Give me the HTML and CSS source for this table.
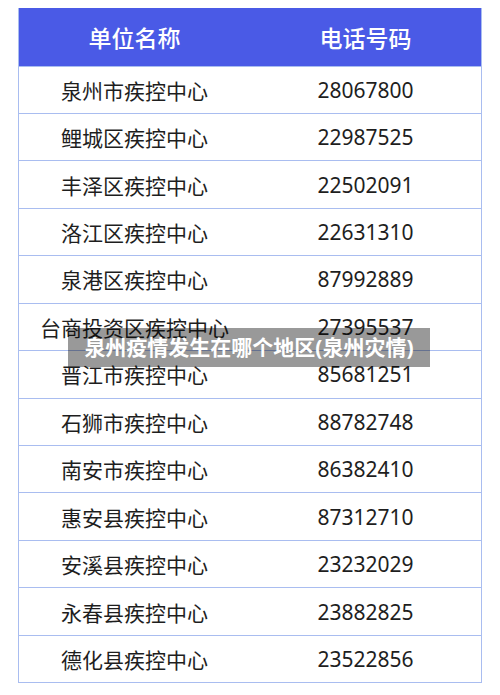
FILE: index.html
```html
<!DOCTYPE html>
<html lang="zh">
<head>
<meta charset="utf-8">
<link rel="stylesheet" href="styles.css">
</head>
<body>
<div class="page">
  <div class="table">
    <div class="row head"><div>单位名称</div><div>电话号码</div></div>
    <div class="row"><div>泉州市疾控中心</div><div>28067800</div></div>
    <div class="row"><div>鲤城区疾控中心</div><div>22987525</div></div>
    <div class="row"><div>丰泽区疾控中心</div><div>22502091</div></div>
    <div class="row"><div>洛江区疾控中心</div><div>22631310</div></div>
    <div class="row"><div>泉港区疾控中心</div><div>87992889</div></div>
    <div class="row"><div>台商投资区疾控中心</div><div>27395537</div></div>
    <div class="row"><div>晋江市疾控中心</div><div>85681251</div></div>
    <div class="row"><div>石狮市疾控中心</div><div>88782748</div></div>
    <div class="row"><div>南安市疾控中心</div><div>86382410</div></div>
    <div class="row"><div>惠安县疾控中心</div><div>87312710</div></div>
    <div class="row"><div>安溪县疾控中心</div><div>23232029</div></div>
    <div class="row"><div>永春县疾控中心</div><div>23882825</div></div>
    <div class="row"><div>德化县疾控中心</div><div>23522856</div></div>
  </div>
  <div class="caption">泉州疫情发生在哪个地区(泉州灾情)</div>
</div>
</body>
</html>
```
FILE: styles.css
```css
html, body {
  margin: 0;
  padding: 0;
  background: #fff;
}
.page {
  position: relative;
  width: 500px;
  height: 695px;
  padding: 8px 18px 0 18px;
  box-sizing: border-box;
  font-family: "Noto Sans", "Noto Sans CJK SC", sans-serif;
}
.table {
  border: 1.5px solid #a9bdf0;
  border-top: none;
}
.row {
  display: grid;
  grid-template-columns: 1fr 1fr;
  height: 47.45px;
  box-sizing: border-box;
  border-top: 1.5px solid #a9bdf0;
  align-items: center;
  text-align: center;
  font-size: 21px;
  color: #1e1e1e;
}
.row div {
  white-space: nowrap;
}
.row.head {
  height: 57.5px;
  border-top: none;
  background: #4a5ae6;
  color: #fff;
  font-size: 23px;
  font-weight: 500;
}
.caption {
  position: absolute;
  left: 68px;
  top: 328px;
  width: 362px;
  height: 39px;
  background: rgba(0, 0, 0, 0.4);
  color: #fff;
  font-size: 21px;
  font-weight: 700;
  line-height: 39px;
  text-align: center;
  white-space: nowrap;
}
```
